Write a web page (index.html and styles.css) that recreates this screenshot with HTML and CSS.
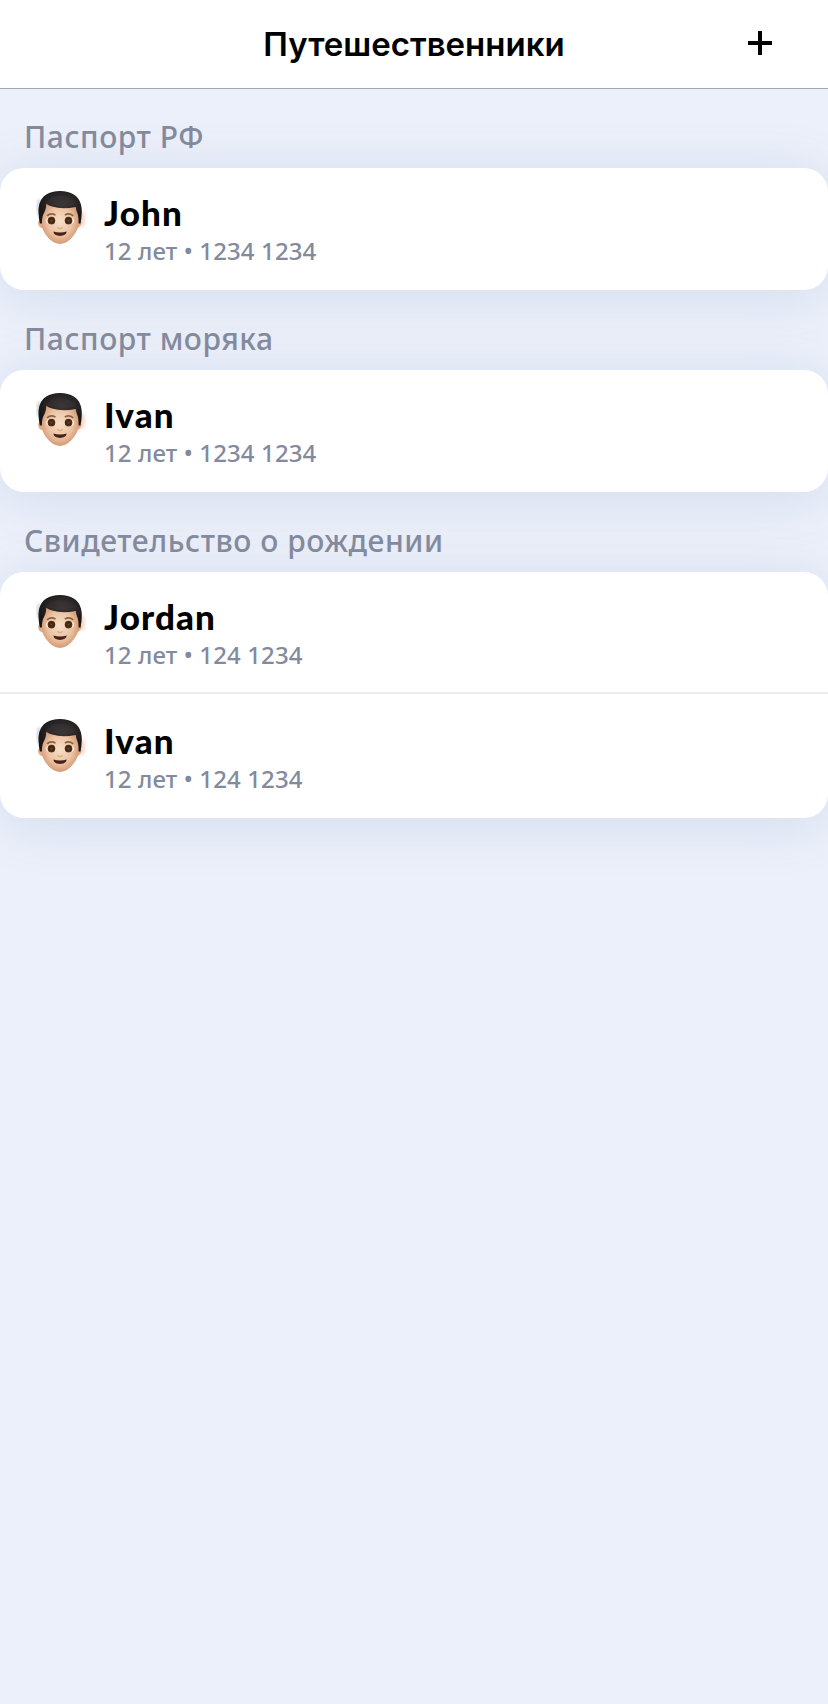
FILE: index.html
```html
<!DOCTYPE html>
<html lang="ru">
<head>
<meta charset="utf-8">
<title>Путешественники</title>
<link rel="stylesheet" href="styles.css">
</head>
<body>
<svg class="defs" width="0" height="0" aria-hidden="true">
  <defs>
    <radialGradient id="skin" cx=".5" cy=".5" r=".58"><stop offset="0" stop-color="#f7dfc6"/><stop offset=".55" stop-color="#ebc3a2"/><stop offset="1" stop-color="#cc865f"/></radialGradient>
    <radialGradient id="hair" cx=".55" cy=".4" r=".55"><stop offset="0" stop-color="#3b3534"/><stop offset=".6" stop-color="#292526"/><stop offset="1" stop-color="#171719"/></radialGradient>
    <radialGradient id="iris"><stop offset="0" stop-color="#68401e"/><stop offset=".6" stop-color="#40220e"/><stop offset="1" stop-color="#5d3a1e"/></radialGradient>
    <filter id="glow" x="-100%" y="-50%" width="300%" height="200%"><feGaussianBlur stdDeviation="1.6"/></filter>
    <symbol id="face" viewBox="1 0 52 58">
      <ellipse cx="47" cy="30" rx="3" ry="8" fill="#f7c9b0" opacity=".7" filter="url(#glow)"/>
      <ellipse cx="4" cy="18" rx="2.500" ry="8" fill="#999" opacity=".4" filter="url(#glow)"/>
      <path d="M4.500 31Q2.600 32 3.500 36Q4.600 39.500 8 39L43 39Q45.800 38 46.500 34.500Q46.800 31.500 45 31Z" fill="#e3ad87"/>
      <path d="M5.500 14L6 33Q6.700 40 11 46Q17.500 54.900 25 54.900Q32.500 54.900 39 46Q43.500 40 44.200 33L44.500 14Q25 6 5.500 14Z" fill="url(#skin)"/>
      <path d="M4.800 34.500Q2.500 23 4.200 15.500Q8 2.100 25 2Q42 2.100 46 15.500Q47.800 23 45.500 34.500L43.600 34.500Q43.700 27 42.300 24Q41 21.500 40.800 18Q27 20.800 17 17.500Q13 16.200 11.300 14.800Q11 21 9 24Q7 27 6.800 34.500Z" fill="url(#hair)"/>
      <path d="M11 14Q15 7 25 7Q35 7 42 15Q30 19 18 16Q14 15 11 14Z" fill="#41393a" opacity=".3"/>
      <path d="M12 26.800Q16 23.300 20.500 26.100" fill="none" stroke="#8b6046" stroke-width="1.700"/>
      <path d="M29.800 26.100Q34 23.300 38.300 26.800" fill="none" stroke="#8b6046" stroke-width="1.700"/>
      <ellipse cx="16.200" cy="31.800" rx="5.200" ry="3.900" fill="#fff3e8"/><ellipse cx="33.800" cy="31.800" rx="5.200" ry="3.900" fill="#fff3e8"/>
      <circle cx="16.500" cy="31.600" r="3.900" fill="url(#iris)"/><circle cx="33.500" cy="31.600" r="3.900" fill="url(#iris)"/>
      <path d="M22.500 38.300Q25 41 27.800 38.300" fill="none" stroke="#dfac8b" stroke-width="1.300"/>
      <path d="M18.300 42.600Q25 44.400 31.800 42.600Q31 46.900 25 47Q19 46.900 18.300 42.600Z" fill="#49231a"/>
    </symbol>
  </defs>
</svg>
<header class="navbar">
  <h1 class="navbar-title">Путешественники</h1>
  <button class="add" aria-label="Добавить"><svg class="add-icon" viewBox="0 0 24 24"><path d="M0 10H10V0H14V10H24V14H14V24H10V14H0Z"/></svg></button>
</header>
<main class="list">
  <section class="group">
    <h2 class="group-title">Паспорт РФ</h2>
    <div class="card">
      <div class="row"><svg class="avatar"><use href="#face"/></svg><div class="info"><div class="name">John</div><div class="meta">12 лет • 1234 1234</div></div></div>
    </div>
  </section>
  <section class="group">
    <h2 class="group-title">Паспорт моряка</h2>
    <div class="card">
      <div class="row"><svg class="avatar"><use href="#face"/></svg><div class="info"><div class="name">Ivan</div><div class="meta">12 лет • 1234 1234</div></div></div>
    </div>
  </section>
  <section class="group">
    <h2 class="group-title">Свидетельство о рождении</h2>
    <div class="card">
      <div class="row row-first"><svg class="avatar"><use href="#face"/></svg><div class="info"><div class="name">Jordan</div><div class="meta">12 лет • 124 1234</div></div></div>
      <div class="row row-next"><svg class="avatar"><use href="#face"/></svg><div class="info"><div class="name">Ivan</div><div class="meta">12 лет • 124 1234</div></div></div>
    </div>
  </section>
</main>
</body>
</html>
```
FILE: styles.css
```css
* { box-sizing: border-box; }
body { margin: 0; min-height: 1704px; background: #ecf0fa; font-family: "Noto Sans", sans-serif; overflow-x: hidden; }
.defs { display: block; }
.navbar { position: relative; z-index: 1; height: 89px; background: #fff; border-bottom: 1px solid #a4a8af; display: grid; grid-template-columns: 136px 1fr 136px; align-items: center; }
.navbar-title { grid-column: 2; margin: 0; text-align: center; font: 600 33px/40px Inter, sans-serif; color: #000; }
.add { border: 0; background: none; padding: 0; display: flex; justify-content: center; }
.add-icon { width: 24px; height: 24px; margin-top: -3px; }
.list { display: flex; flex-direction: column; }
.group-title { margin: 0; height: 80px; padding: 29px 0 0 24px; font-size: 30px; line-height: 40px; font-weight: 500; letter-spacing: .55px; color: #838a9d; white-space: nowrap; position: relative; z-index: 1; }
.group:first-child .group-title { height: 79px; padding-top: 28px; }
.card { background: #fff; border-radius: 24px; box-shadow: 0 6px 56px rgba(50, 100, 150, .14); }
.row { height: 122px; padding: 21px 36px 0; display: flex; gap: 16px; }
.row-first { height: 120px; }
.row-next { height: 126px; padding-top: 23px; border-top: 2px solid #e7ecf5; }
.avatar { width: 52px; height: 58px; flex: none; }
.info { white-space: nowrap; }
.name { height: 46px; font-family: Lato, "Noto Sans", sans-serif; font-size: 35px; line-height: 46px; font-weight: 900; letter-spacing: 1.1px; color: #000; }
.meta { font-size: 24px; line-height: 32px; font-weight: 500; letter-spacing: .12px; color: #838a9d; }
```
